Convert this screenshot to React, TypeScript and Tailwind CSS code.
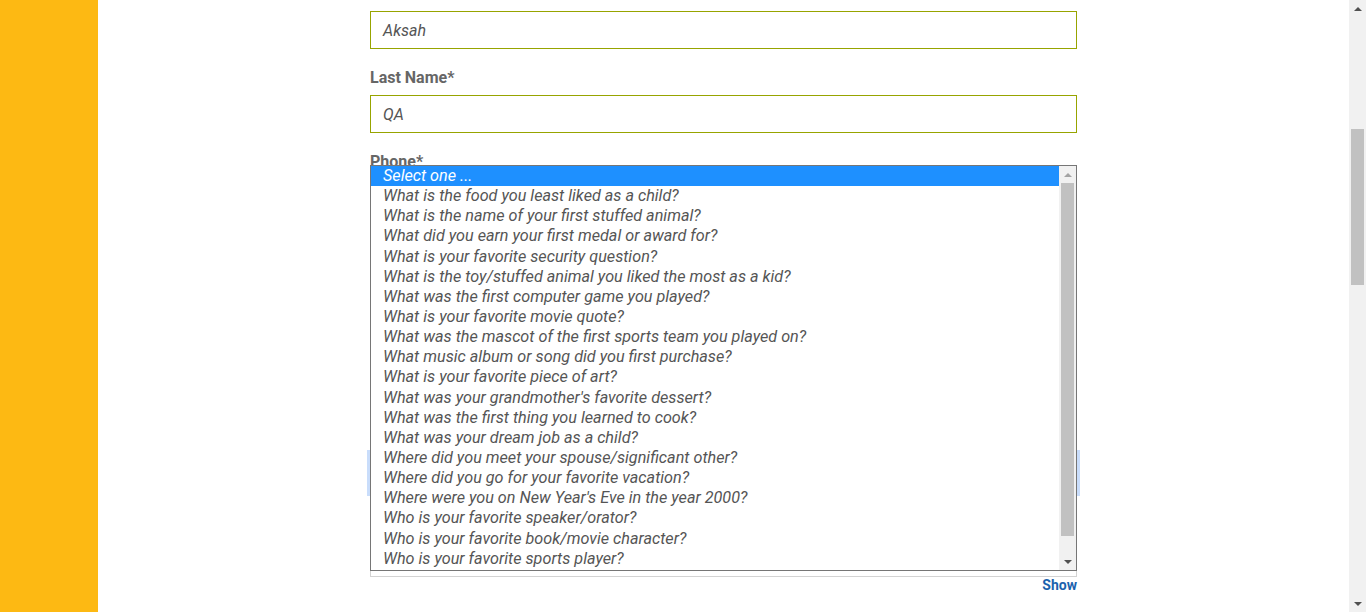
import React from 'react';

const questions = [
  'What is the food you least liked as a child?',
  'What is the name of your first stuffed animal?',
  'What did you earn your first medal or award for?',
  'What is your favorite security question?',
  'What is the toy/stuffed animal you liked the most as a kid?',
  'What was the first computer game you played?',
  'What is your favorite movie quote?',
  'What was the mascot of the first sports team you played on?',
  'What music album or song did you first purchase?',
  'What is your favorite piece of art?',
  "What was your grandmother's favorite dessert?",
  'What was the first thing you learned to cook?',
  'What was your dream job as a child?',
  'Where did you meet your spouse/significant other?',
  'Where did you go for your favorite vacation?',
  "Where were you on New Year's Eve in the year 2000?",
  'Who is your favorite speaker/orator?',
  'Who is your favorite book/movie character?',
  'Who is your favorite sports player?',
];

function Arrow({ up, color }: { up?: boolean; color: string }) {
  return (
    <svg width="8" height="4" viewBox="0 0 8 4">
      <polygon points={up ? '0,4 8,4 4,0' : '0,0 8,0 4,4'} fill={color} />
    </svg>
  );
}

function Field({ value }: { value?: string }) {
  return (
    <div className="h-[38px] border border-[#97a400] px-3 pt-[1px] flex items-center italic text-[16px] text-[#555]">
      {value}
    </div>
  );
}

function Label({ children }: { children?: React.ReactNode }) {
  return <div className="mt-[17px] mb-[5px] h-6 leading-6 text-[16px] font-bold text-[#666]">{children}</div>;
}

export default function App() {
  return (
    <div className="flex h-[612px] overflow-hidden bg-white font-['Roboto',sans-serif]">
      <aside className="w-[98px] shrink-0 bg-[#fdb913]" />

      <main className="flex-1">
        <div className="relative ml-[272px] w-[707px] pt-[11px]">
          <Field value="Aksah" />
          <Label>Last Name*</Label>
          <Field value="QA" />
          <Label>Phone*</Label>
          {/* fields hidden behind the open list */}
          <Field />
          <Label />
          <Field />
          <Label />
          <Field />
          <Label />
          <div className="mt-[27px] h-[40px] border border-[#86b7fe] shadow-[0_0_0_3px_#c9ddfb]" />
          <div className="mt-[46px] h-[38px] border border-[#d3d3d3]" />
          <div className="flex justify-end h-4 leading-4 text-[14px] font-bold text-[#1b62ad]">Show</div>

          {/* open select list */}
          <div className="absolute top-[165px] left-0 w-[707px] h-[406px] border border-[#767676] bg-white flex">
            <ul className="flex-1 italic text-[16.2px] leading-[20.15px]">
              <li className="h-[20.15px] pl-3 bg-[#1e90ff] text-white">Select one ...</li>
              {questions.map((q) => (
                <li key={q} className="h-[20.15px] pl-3 text-[#555] whitespace-nowrap">
                  {q}
                </li>
              ))}
            </ul>
            <div className="w-[17px] bg-[#f1f1f1] flex flex-col items-center">
              <div className="h-[17px] flex items-center justify-center">
                <Arrow up color="#a3a3a3" />
              </div>
              <div className="w-[13px] h-[353px] bg-[#c1c1c1]" />
              <div className="flex-1" />
              <div className="h-[17px] flex items-center justify-center">
                <Arrow color="#505050" />
              </div>
            </div>
          </div>
        </div>
      </main>

      <div className="w-[17px] shrink-0 bg-[#f1f1f1] flex flex-col items-center">
        <div className="h-[17px] flex items-center justify-center">
          <Arrow up color="#505050" />
        </div>
        <div className="mt-[112px] w-[13px] h-[156px] bg-[#c1c1c1]" />
        <div className="flex-1" />
        <div className="h-[17px] flex items-center justify-center">
          <Arrow color="#505050" />
        </div>
      </div>
    </div>
  );
}
